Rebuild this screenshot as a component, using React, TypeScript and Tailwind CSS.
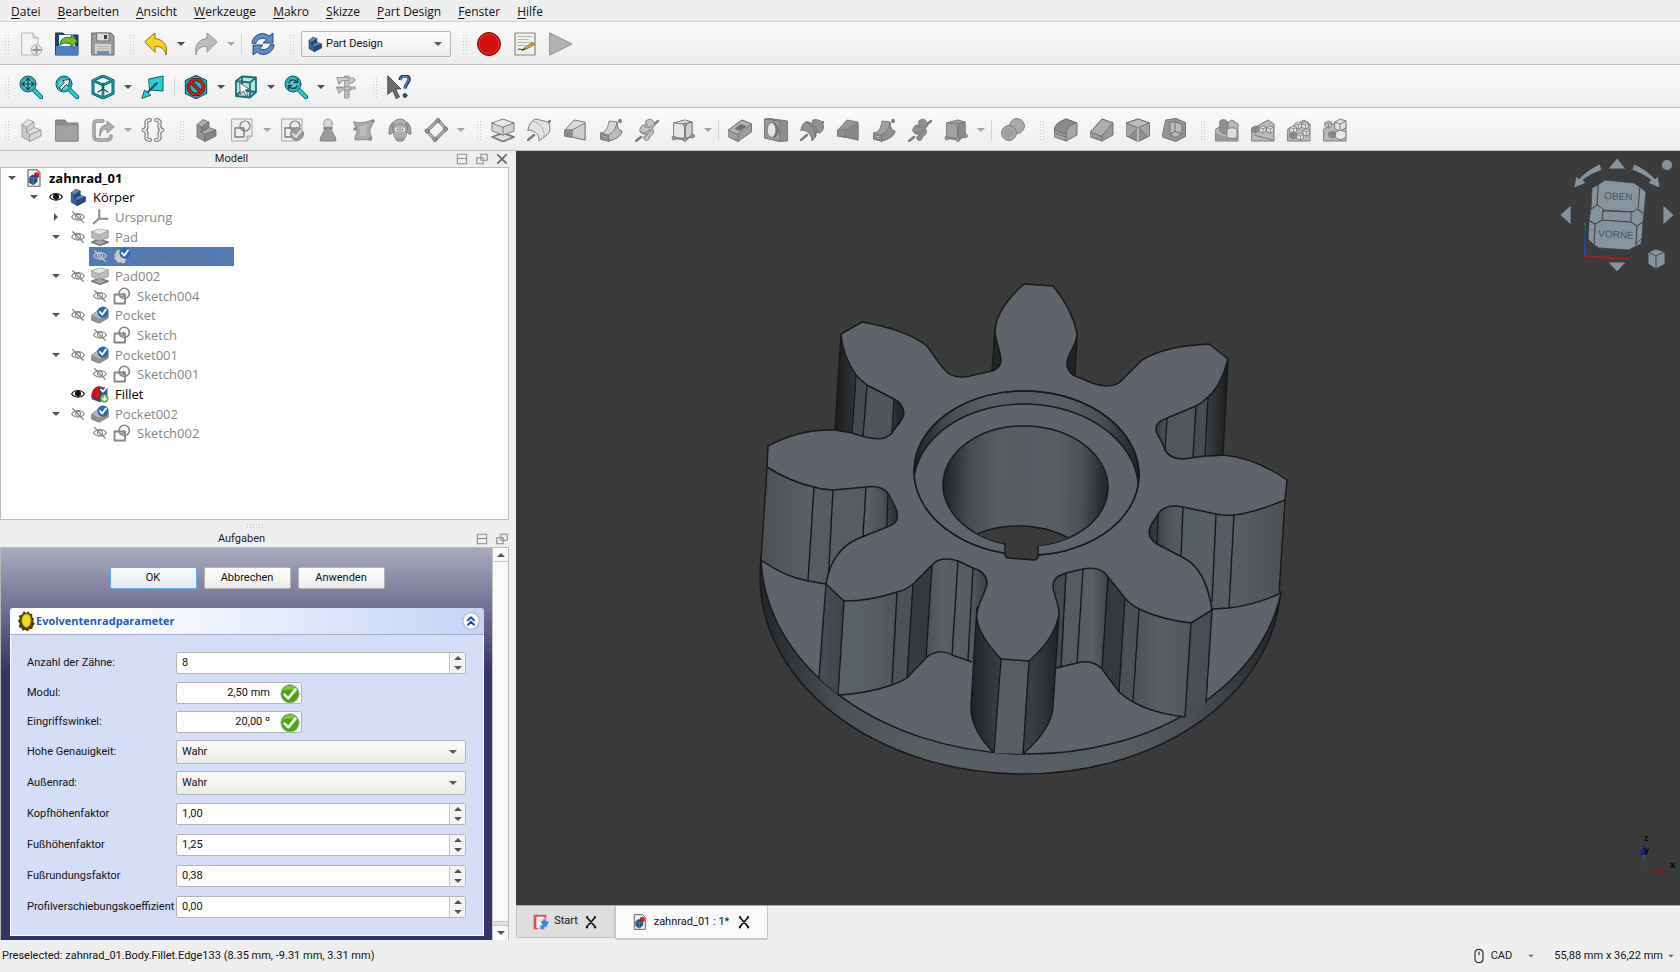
import type { ReactNode } from "react"

const D = "#7c7c7c" // outline of disabled icons
const M = "#9d9d9d"
const L = "#b9b9b9"
const W = "#e2e2e2"
const T = "#0c5a60"
const C = "#22d3dc"

function Icon({ children, className = "size-6" }: { children: ReactNode; className?: string }) {
  return (
    <svg viewBox="0 0 24 24" className={`${className} shrink-0`} fill="none" strokeLinejoin="round" strokeLinecap="round" aria-hidden="true">
      {children}
    </svg>
  )
}

function Arrow({ className = "text-[#555]", up = false }: { className?: string; up?: boolean }) {
  return (
    <svg viewBox="0 0 8 4" className={`w-2 h-1 shrink-0 ${className}`} aria-hidden="true">
      <path d={up ? "M0 4h8L4 0z" : "M0 0h8L4 4z"} fill="currentColor" />
    </svg>
  )
}

const stairs = (l: string, m: string, d: string, s: string) => (
  <g stroke={s} strokeWidth="0.8">
    <path d="M3 7v12l8 4.500V16l-3-2V9z" fill={m} />
    <path d="M3 6.500 9 1.500l6 2.500-7 5z" fill={l} />
    <path d="M8 9l7-5v5.500l-7 4.500z" fill={d} />
    <path d="M8 14l7-4.500 7 2.500-11 4.500z" fill={l} />
    <path d="M11 16.500 22 12v6l-11 5.500z" fill={d} />
  </g>
)

const magnifier = (
  <>
    <path d="M14 14l8 8" stroke={T} strokeWidth="4.500" />
    <path d="M14 14l8 8" stroke={C} strokeWidth="2.600" />
    <circle cx="9" cy="9" r="8" fill="#5ecdd4" stroke={T} strokeWidth="1" />
    <circle cx="9" cy="9" r="6.500" stroke="#18a9b4" strokeWidth="1.600" />
  </>
)

const sketchGrey = (
  <>
    <path d="M2 1h20v17l-5 5H2z" fill="#efefef" stroke="#a5a5a5" />
    <path d="M17 23v-5h5" fill="#ddd" stroke="#a5a5a5" />
    <path d="M5 10h9v9H5z" stroke={D} strokeWidth="1.400" />
    <circle cx="15" cy="8" r="5" stroke={D} strokeWidth="1.200" />
  </>
)

const loft = (f: string, g: string) => (
  <g stroke={D} strokeWidth="1">
    <path d="M2 12 11 2l11 2v18L9 19l-7-1z" fill={f} />
    <path d="M9 12 22 5v17L9 19z" fill={g} />
    <path d="M2 12h7v7l-7-1z" fill={M} strokeWidth="1.300" />
    <path d="M4.500 14.500h2.500v2.500H4.500z" />
  </g>
)
const pipe = (f: string, g: string) => (
  <g stroke={D} strokeWidth="1">
    <path d="M2 15c5-1 7-5 8-12l8 1c0 5 1 8 5 9-1 6-7 8-13 10l-8-2z" fill={f} />
    <path d="M9 17c5-2 8-6 9-13 0 5 1 8 5 9-1 6-7 8-13 10z" fill={g} />
    <path d="M2 15l7 2 1 6-8-2z" fill={M} strokeWidth="1.300" />
    <path d="M4.500 17.500h2.500v2H4.500z" fill={W} />
    <path d="M21 2.500v1" strokeWidth="3.500" />
  </g>
)
const helix = (f: string) => (
  <g stroke={D}>
    <path d="M1 23l5-4M18 7l5-4" strokeWidth="2.500" />
    <path d="M11 3c3-3 7-2 7 1 3 2 2 5-1 6 3 4 1 7-3 9 1 3-3 5-5 2-1-3 2-4 4-5-5 1-9-1-8-5 1-4 5-5 8-4-2-1-3-2-2-4z" fill={f} />
    <path d="M5 13c2 3 8 2 10-2M9 8c3 2 7 2 9-1M9 20c1-3 5-3 7-8" />
  </g>
)
const cubeNodes = (f: string, g: string) => (
  <g stroke={D}>
    <path d="M3 5l12-2 6 1v14l-7 4-11-2z" fill={f} />
    <path d="M3 5l11 1 7-2-7-2z" fill={f} />
    <path d="M14 6l7-2v14l-7 4z" fill={g} />
    <path d="M14 6v15L3 20M14 21l8-3" strokeWidth="1.800" />
    <circle cx="14" cy="6.500" r="1.700" fill={M} />
    <circle cx="3" cy="20" r="1.900" fill={M} />
    <circle cx="14" cy="21.500" r="1.900" fill={M} />
    <circle cx="21.500" cy="18" r="1.900" fill={M} />
  </g>
)
const isoBox = (x: number, y: number, f: string) => (
  <g transform={`translate(${x} ${y})`} stroke={D} strokeWidth="0.800">
    <path d="M0 1.700 3 0l3.500 1.200v4L3.500 7 0 5.500z" fill={f} />
    <path d="M0 1.700l3.500 1.300 3-1.800M3.500 3v4" />
  </g>
)
const ground = <path d="M1 11 17 2l6 4v17H1z" fill={L} stroke={D} />

const icons: Record<string, ReactNode> = {
  neu: (
    <>
      <path d="M3 1h11l5 5v17H3z" fill="#f4f4f4" stroke="#b5b5b5" />
      <path d="M14 1v5h5" fill="#ddd" stroke="#b5b5b5" />
      <circle cx="17.500" cy="18" r="5.300" fill="#eee" stroke="#a9a9a9" />
      <path d="M17.500 14.500v7M14 18h7" stroke="#999" strokeWidth="2" />
    </>
  ),
  oeffnen: (
    <>
      <path d="M1 1h7l2 2h13v20H1z" fill="#1f477d" stroke="#14305a" />
      <path d="M4 3h13l3 3v10H4z" fill="#fafafa" />
      <path d="M1 14h22v9H1z" fill="#4b7fc0" />
      <path d="M5 13c0-6 5-9 11-7V3.500l6.500 5.500-6.500 6v-3c-5-2-8-1-11 1z" fill="#6cc025" stroke="#2f6d0c" />
    </>
  ),
  speichern: (
    <>
      <path d="M1 1h19l3 3v19H1z" fill="#9c9c9a" stroke="#6e6e6c" />
      <path d="M6 1h12v8H6z" fill="#dedede" stroke="#777" />
      <path d="M13 3h3v4h-3z" fill="#3c3c3c" />
      <path d="M4 12h16v10H4z" fill="#d2d2d0" />
      <path d="M6 19h12v3H6z" fill="#5e8fd0" />
      <path d="M6 14.500h12M6 16.800h12" stroke="#aaa" strokeWidth="0.700" />
    </>
  ),
  undo: <path d="M1 9.500 11 1v5.500c8 1 13 6 11 16.500-1-6-5-9-11-8.500V20z" fill="#f3d328" stroke="#8a7407" />,
  redo: <path d="M23 9.500 13 1v5.500C5 7.500 0 12.500 2 23c1-6 5-9 11-8.500V20z" fill="#bdbdbd" stroke="#959595" />,
  aktualisieren: (
    <g fill="#5c8cca" stroke="#20426e" strokeWidth="0.900">
      <path d="M1 11C1 4 11-2 18 4l4-3v10H12l3.500-3.500C11 5 6 7 5 11z" />
      <path d="M23 13c0 7-10 13-17 7l-4 3V13h10l-3.500 3.500c4.500 2.500 9.500.5 10.500-3.500z" />
    </g>
  ),
  aufnahme: (
    <>
      <circle cx="12" cy="12" r="11.500" fill="#d00f10" stroke="#7e0808" />
      <circle cx="12" cy="12" r="10" stroke="#ee3737" strokeWidth="0.800" />
    </>
  ),
  makro: (
    <>
      <path d="M2 1h20v22H2z" fill="#f1f1ef" stroke="#85857f" strokeWidth="1.200" />
      <path d="M5 4.500h14M5 7.500h10M5 10.500h14M5 13.500h8" stroke="#aaa" strokeWidth="0.900" />
      <path d="M9 18l4-3.500 7-4 1.500 2-7 4z" fill="#dfae2b" stroke="#6a4a0a" strokeWidth="0.700" />
      <path d="M5 17.500c3-2 3 2 7-.5" stroke="#222" />
    </>
  ),
  play: <path d="M1 1l22 11L1 23z" fill="#b3b3b3" stroke="#8d8d8d" />,
  allesZeigen: (
    <>
      {magnifier}
      <path d="M9 3.500v11M3.500 9h11M7 5.500l2-2.300 2 2.300M7 12.500l2 2.300 2-2.300M5.500 7 3.200 9l2.300 2M12.500 7l2.300 2-2.300 2" stroke="#123d42" strokeWidth="1.200" />
    </>
  ),
  auswahlZeigen: (
    <>
      {magnifier}
      <path d="M4.500 12.500l5-5-2-2 7-1-1 7-2-2-5 5z" fill="#fff" stroke="#14363a" strokeWidth="0.900" />
    </>
  ),
  iso: (
    <>
      <path d="M12 1l10 4.500v13L12 23 2 18.500v-13z" fill="#eafcfd" stroke={T} strokeWidth="3" />
      <path d="M2 5.500 12 10l10-4.500M12 10v13" stroke={T} strokeWidth="2.600" />
      <path d="M12 1l10 4.500v13L12 23 2 18.500v-13zM2 5.500 12 10l10-4.500M12 10v13" stroke="#1fb4bd" strokeWidth="1" />
      <path d="M7 17l5-3 5 3M12 14V8" stroke="#2a3c3e" strokeWidth="1.200" />
    </>
  ),
  ansicht: (
    <>
      <path d="M8 4l14-3v15L9 15z" fill={C} stroke={T} />
      <path d="M16 8 6 18" stroke={T} strokeWidth="2" />
      <path d="M1 23l2.500-8 6 5z" fill={C} stroke={T} />
      <circle cx="14" cy="9.500" r="1.500" fill={T} />
    </>
  ),
  stil: (
    <>
      <path d="M12 .5l10.500 5v13L12 23.500 1.500 18.500v-13z" fill="#1cb9c4" stroke={T} strokeWidth="1.300" />
      <circle cx="12" cy="12" r="7.500" stroke="#5d0808" strokeWidth="3.600" />
      <path d="M7 7l10 10" stroke="#5d0808" strokeWidth="3.600" />
      <circle cx="12" cy="12" r="7.500" stroke="#d51f1f" strokeWidth="2.200" />
      <path d="M7 7l10 10" stroke="#d51f1f" strokeWidth="2.200" />
    </>
  ),
  auswahl: (
    <>
      <path d="M2 6 8 1.500l14 1V17l-6 5.500L2 21z" fill="#b5e4e6" />
      <path d="M2 6l14 1.500v15L2 21zM2 6l6-4.500 14 1L16 7.500M22 2.500V17l-6 5.500M8 2v13l14 2M8 15l-6 6" stroke="#1b6e74" strokeWidth="1.800" />
      <path d="M6 8l9 6-3.500 1 2.500 5-2 1-2.500-5L6.500 19z" fill="#fff" stroke="#444" strokeWidth="0.800" />
    </>
  ),
  sync: (
    <>
      {magnifier}
      <path d="M5 8c1-4 6-4 8-1M13.500 4v3.500H10M13 10.500c-1 4-6 3.500-8 1M4.500 14v-3.500H8" stroke="#123d42" strokeWidth="1.300" />
    </>
  ),
  messen: (
    <>
      <path d="M11 1h4v22h-4z" fill="#c7c7c7" stroke="#999" />
      <path d="M3 2.500h12v3H8L5 9zM2 13h9M15 3h4l2 2-3 3h-3M3 12h14v3H8l-3 3zM15 12h6v2h-6" fill="#cfcfcf" stroke="#999" strokeWidth="1.200" />
      <path d="M13 17h2M13 19.500h2" stroke="#888" strokeWidth="0.800" />
    </>
  ),
  hilfe: (
    <>
      <path d="M1 1l13 13H8.500l4 8-3.500 1.500-3-8L1 19z" fill="#6c6e6b" stroke="#333" strokeWidth="0.800" />
      <path d="M13 5c1-6 10-5 9 0-.5 3.500-4 3.500-4 8.500" stroke="#1d3454" strokeWidth="3.400" strokeLinecap="butt" />
      <path d="M13.500 5c1-5 8.500-4.500 8 0-.5 3.500-3.700 3.500-3.700 8" stroke="#5a83bd" strokeWidth="1.600" strokeLinecap="butt" />
      <circle cx="18" cy="20.500" r="1.900" fill="#3c5f92" stroke="#1d3454" />
    </>
  ),
  teil: stairs(W, "#c9c9c9", "#d5d5d5", "#949494"),
  gruppe: (
    <>
      <path d="M1 2h9l2 3h11v18H1z" fill="#8c8c8c" stroke="#7f7f7f" />
      <path d="M1 7h22v16H1z" fill="#a2a2a2" stroke="#8a8a8a" />
    </>
  ),
  link: (
    <>
      <path d="M12 3H6Q3 3 3 6v12q0 4 4 4h9q4 0 4-4" stroke="#888" strokeWidth="3.400" />
      <path d="M12 3H6Q3 3 3 6v12q0 4 4 4h9q4 0 4-4" stroke="#b0b0b0" strokeWidth="1.800" />
      <path d="M9 18c-1-6 1-11 7-11V3l7 6-7 6v-4c-4 0-6 2-7 7z" fill="#b0b0b0" stroke="#888" />
    </>
  ),
  varset: (
    <>
      <path d="M9 2C5 2 5 4 5.500 7S5 11.500 2.500 12c2.500.5 3.500 2 3 5s-.5 5 3.500 5M15 2c4 0 4 2 3.500 5s.5 4.500 3 5c-2.500.5-3.500 2-3 5s.5 5-3.500 5" stroke="#7e7e7e" strokeWidth="4" />
      <path d="M9 2C5 2 5 4 5.500 7S5 11.500 2.500 12c2.500.5 3.500 2 3 5s-.5 5 3.500 5M15 2c4 0 4 2 3.500 5s.5 4.500 3 5c-2.500.5-3.500 2-3 5s.5 5-3.500 5" stroke="#e8e8e8" strokeWidth="1.800" />
    </>
  ),
  koerper: stairs("#aaa", "#929292", "#848484", "#6c6c6c"),
  skizze: sketchGrey,
  skizzePruefen: (
    <>
      {sketchGrey}
      <circle cx="17" cy="16" r="6.500" fill="#9a9a9a" stroke="#8a8a8a" />
      <path d="M13 16l3 3 5-6.500" stroke="#e5e5e5" strokeWidth="2" />
    </>
  ),
  pruefen: (
    <>
      <path d="M9 9C9 15 4 17 4 23h16c0-6-5-8-5-14z" fill="#9b9b9b" stroke="#858585" />
      <circle cx="12" cy="5.500" r="4.500" fill="#d5d5d5" stroke="#999" />
      <path d="M8 10h8" stroke="#858585" strokeWidth="2" />
    </>
  ),
  shapebinder: (
    <>
      <path d="M2 4c6 2 12 0 19-2 1 4-3 7-3 11s3 6 1 9c-6-1-10 0-16 0-1-4 3-6 2-10-1-3-3-5-3-8z" fill="#aaa" stroke="#8b8b8b" />
      <path d="M7 8c4 0 7-1 9-2-2 4-2 8-1 12-3-1-5 0-8 0 2-3 1-7 0-10z" fill="#bebebe" />
      <circle cx="21" cy="3" r="1.800" fill="#888" />
      <circle cx="3" cy="11" r="1.800" fill="#888" />
      <circle cx="18" cy="21" r="1.800" fill="#888" />
    </>
  ),
  klon: (
    <g stroke="#7f7f7f">
      <path d="M6 4C2 5 1 10 1 16c3 1 5-2 5-7zM18 4c4 1 5 6 5 12-3 1-5-2-5-7z" fill="#a0a0a0" />
      <path d="M6 4c3-4 9-4 12 0l1 5c0 6-1 10-4 14H9C6 19 5 15 5 9z" fill="#b0b0b0" />
      <path d="M6 8c3-3 9-3 12 0M9.500 20l2.500 1.500 2.500-1.500" />
      <circle cx="9" cy="11.500" r="2" fill="#eee" stroke="none" />
      <circle cx="15" cy="11.500" r="2" fill="#eee" stroke="none" />
      <path d="M9.500 11.500h.1M14.500 11.500h.1" stroke="#444" strokeWidth="1.500" />
    </g>
  ),
  bezug: (
    <>
      <path d="M3 13 14 2l8 9-11 11z" stroke="#868686" strokeWidth="3.200" />
      <path d="M3 13 14 2l8 9-11 11z" stroke="#b5b5b5" strokeWidth="1.200" />
      {[[3, 13], [14, 2.500], [21.500, 11], [11, 21.500]].map(([x, y]) => (
        <circle key={x} cx={x} cy={y} r="2" fill="#9a9a9a" stroke="#777" />
      ))}
    </>
  ),
  pad: (
    <>
      <path d="M1 19l11-4 11 4-11 4.500z" fill="#ddd" stroke="#777" strokeWidth="1.800" />
      <g stroke={D}>
        <path d="M1 5v8l11 4 11-4V5z" fill="#d4d4d4" />
        <path d="M1 5 12 1l11 4-11 4z" fill="#e9e9e9" />
        <path d="M12 9v8" />
      </g>
    </>
  ),
  drehung: (
    <>
      <path d="M1 22l6-5M19 7l4-4" stroke={D} strokeWidth="2.500" />
      <path d="M1 12C2 6 5 2 9 1l12 3c3 4 2 9 0 12l-9 7c1-6-4-11-11-11z" fill={W} stroke={D} />
      <path d="M6 3c7 2 12 8 11 16" stroke="#aaa" />
    </>
  ),
  loft: loft("#dcdcdc", "#cecece"),
  pipe: pipe("#d5d5d5", "#bdbdbd"),
  helix: helix("#c4c4c4"),
  primitiv: cubeNodes("#e6e6e6", "#d0d0d0"),
  pocket: (
    <g stroke="#6f6f6f" strokeWidth="0.900">
      <path d="M0.500 12 14 2l9.500 4v8L10 23.500.5 19z" fill={M} />
      <path d="M.5 12 14 2l9.500 4L10 16z" fill="#b4b4b4" />
      <path d="M10 16v7.500" />
      <path d="M7.500 10.500 13 6.500l5 2-6 4z" fill="#707070" />
    </g>
  ),
  bohrung: (
    <g stroke="#6f6f6f" strokeWidth="0.900">
      <path d="M1 1l5-.5L23.500 3v20l-7 .5L1 20z" fill="#8e8e8e" />
      <path d="M1 1l15 2.500v20L1 20z" fill={M} />
      <ellipse cx="8.500" cy="12" rx="5.500" ry="7.500" fill="#e5e5e5" />
      <path d="M9 5c4 3 4 11 0 14 7 1 7-14 0-14z" fill="#777" />
    </g>
  ),
  nut: (
    <>
      <path d="M1 22l6-5M19 7l4-3" stroke={D} strokeWidth="2.500" />
      <path d="M1 12C2 6 5 3 9 4l3 2 1-4c4-1 8 0 10 4 1 4 0 7-3 9l-4-1v4l-4 5c0-6-4-11-11-11z" fill="#929292" stroke="#6f6f6f" />
      <path d="M6 4c7 3 10 9 9 15M13 7c3 2 4 4 4 7" stroke="#6f6f6f" />
    </>
  ),
  loftSub: loft("#979797", "#888"),
  pipeSub: pipe("#a0a0a0", "#8e8e8e"),
  helixSub: helix("#8f8f8f"),
  primitivSub: cubeNodes("#a2a2a2", "#8c8c8c"),
  boolesch: (
    <g stroke="#858585">
      <circle cx="16" cy="8" r="7.500" fill="#a9a9a9" />
      <circle cx="8" cy="15" r="7.500" fill="#9c9c9c" />
      <circle cx="8" cy="15" r="5.500" stroke="#b5b5b5" />
    </g>
  ),
  fillet: (
    <g stroke="#707070">
      <path d="M0.500 12C1 6 5 4 12 1l11 4v12l-11 6-11.500-4z" fill="#a4a4a4" />
      <path d="M.5 12C1 6 5 4 12 1l11 4c-7 1-11 5-11 11z" fill="#8b8b8b" />
      <path d="M12 16v7M.5 15l11.500 4" />
    </g>
  ),
  fase: (
    <g stroke="#707070">
      <path d="M0.500 14 12 1l11 4v12l-11 6-11.500-4z" fill="#9a9a9a" />
      <path d="M.5 14 12 1l11 4-11 13z" fill="#adadad" />
      <path d="M12 18v5" />
    </g>
  ),
  formschraege: (
    <g stroke="#707070">
      <path d="M0.500 5 12 1l11.500 4v13L12 23.500.5 18z" fill="#a4a4a4" />
      <path d="M.5 5 12 1l11.500 4L12 9.500z" fill="#bcbcbc" />
      <path d="M12 9.500 3 19l9 4.500 9-4.500z" fill="#8f8f8f" />
      <path d="M12 9.500v14" stroke="#e0e0e0" />
    </g>
  ),
  dicke: (
    <g stroke="#707070">
      <path d="M4 2l10-1.500 9.500 4v14l-10 5L.5 19z" fill="#949494" />
      <path d="M8 4.500v12l6 3 6-4V6l-6-2z" fill="#b9b9b9" />
      <path d="M8 16.500l5-3 7 2M13 13.500V4.500" />
    </g>
  ),
  spiegeln: (
    <>
      {ground}
      <path d="M1 15c7 4 12 4 22 3v5H1z" fill="#9a9a9a" />
      <path d="M5 3c3-3 7-1 8 2v9c-2 3-6 2-8-1z" fill="#909090" stroke={D} />
      <path d="M12 12c0-3 10-3 10 0v7c-2 2-8 2-10 0z" fill="#dedede" stroke={D} />
    </>
  ),
  linear: (
    <>
      {ground}
      <path d="M3 17l19 5" stroke={D} />
      {isoBox(1, 8, "#8c8c8c")}
      {isoBox(8.500, 8, W)}
      {isoBox(16, 8, W)}
    </>
  ),
  polar: (
    <>
      {ground}
      {isoBox(8, 4, W)}
      {isoBox(15, 4, W)}
      {isoBox(3, 8, W)}
      {isoBox(16, 11, W)}
      {isoBox(3, 14, "#8c8c8c")}
      {isoBox(10, 15, W)}
    </>
  ),
  multi: (
    <>
      {ground}
      <path d="M12 4l5-3 6 2v7l-6 3-5-2z" fill="#e0e0e0" stroke={D} />
      <path d="M12 4l5 2 6-3M17 6v7" stroke={D} />
      {isoBox(2, 3, "#c2c2c2")}
      {isoBox(6, 13, "#8c8c8c")}
      <path d="M13 14l4-2 6 2v5l-5 3-5-2z" fill="#e8e8e8" stroke={D} />
    </>
  ),
}

type Tool = string | [string, string]

// "|" separator, ":" grip, "v" / "vd" drop-down arrow (vd = greyed out)
const bar1a: Tool[] = [":", ["neu", "Neu"], ["oeffnen", "Öffnen"], ["speichern", "Speichern"], ":", ["undo", "Rückgängig"], "v", ["redo", "Wiederherstellen"], "vd", "|", ["aktualisieren", "Aktualisieren"], ":"]
const bar1b: Tool[] = [":", ["aufnahme", "Makro aufzeichnen"], ["makro", "Makros"], ["play", "Makro ausführen"]]
const bar2: Tool[] = [":", ["allesZeigen", "Alles anzeigen"], ["auswahlZeigen", "Auswahl anzeigen"], ["iso", "Isometrisch"], "v", ["ansicht", "Ansicht ausrichten"], "|", ["stil", "Darstellungsart"], "v", ["auswahl", "Auswahlfilter"], "v", ["sync", "Ansicht synchronisieren"], "v", ["messen", "Messen"], ":", ["hilfe", "Direkthilfe"]]
const bar3: Tool[] = [
  ":", ["teil", "Teil"], ["gruppe", "Gruppe"], ["link", "Link"], "vd", ["varset", "Variablensatz"],
  ":", ["koerper", "Körper"], ["skizze", "Skizze"], "vd", ["skizzePruefen", "Skizze überprüfen"], ["pruefen", "Geometrie prüfen"], ["shapebinder", "Formbinder"], ["klon", "Klon"], ["bezug", "Bezug"], "vd",
  ":", ["pad", "Aufpolsterung"], ["drehung", "Drehteil"], ["loft", "Ausformung"], ["pipe", "Rohr"], ["helix", "Wendel"], ["primitiv", "Grundkörper"], "vd",
  "|", ["pocket", "Tasche"], ["bohrung", "Bohrung"], ["nut", "Nut"], ["loftSub", "Abzuziehende Ausformung"], ["pipeSub", "Abzuziehendes Rohr"], ["helixSub", "Abzuziehende Wendel"], ["primitivSub", "Abzuziehender Grundkörper"], "vd",
  "|", ["boolesch", "Boolesche Verknüpfung"],
  ":", ["fillet", "Verrundung"], ["fase", "Fase"], ["formschraege", "Formschräge"], ["dicke", "Dicke"],
  ":", ["spiegeln", "Spiegeln"], ["linear", "Lineares Muster"], ["polar", "Polares Muster"], ["multi", "Mehrfachtransformation"],
]

function Grip({ first }: { first: boolean }) {
  return (
    <span className={`${first ? "w-[13px]" : "w-[17px]"} shrink-0 flex justify-end pr-[3px]`}>
      <span className="w-[6px] h-[21px] bg-[radial-gradient(circle,#c6c6c6_1px,transparent_1px)] bg-size-[3px_3px]" />
    </span>
  )
}

function Tools({ items, lead = true }: { items: Tool[]; lead?: boolean }) {
  return (
    <>
      {items.map((t, i) => {
        if (t === ":") return <Grip key={i} first={lead && i === 0} />
        if (t === "|") return <span key={i} className="w-[7px] shrink-0 flex justify-center"><span className="w-px h-5 bg-[#d2d2d2]" /></span>
        if (t === "v" || t === "vd")
          return (
            <button key={i} aria-label="Weitere Optionen" className="w-[14px] h-6 shrink-0 flex items-center justify-center">
              <Arrow className={t === "v" ? "text-[#4d4d4d]" : "text-[#a5a5a5]"} />
            </button>
          )
        return (
          <button key={i} aria-label={t[1]} className="w-9 h-8 shrink-0 flex items-center justify-center">
            <Icon>{icons[t[0]]}</Icon>
          </button>
        )
      })}
    </>
  )
}

function Toolbar({ children }: { children: ReactNode }) {
  return <div className="h-[43px] flex items-center pt-[2px] bg-linear-to-b from-[#fafafa] to-[#eeeeee] border-b border-[#bdbdbd] overflow-hidden">{children}</div>
}

const blueBody = stairs("#5b8ac2", "#3a679f", "#27497a", "#17305a")

const docIcon = (
  <>
    <path d="M4 1h12l4 4v18H4z" fill="#f2f2f2" stroke="#666" strokeWidth="1.500" />
    <path d="M12 6l3-2 4 1.500v5L15 13l-3-2z" fill="#cc1d22" />
    <path d="M6 11l4-3 6 3v6l-5 4-5-3z" fill="#2c5590" stroke="#17305a" />
    <path d="M6 11l5 2 5-2M11 13v8" stroke="#7aa3d8" strokeWidth="0.700" />
  </>
)

const check = (
  <>
    <circle cx="16" cy="8" r="7.500" fill="#2f67b0" />
    <path d="M12 8l3 3.500 5-7" stroke="#fff" strokeWidth="2.400" />
  </>
)

const treeIcons: Record<string, ReactNode> = {
  doc: docIcon,
  body: blueBody,
  origin: <path d="M11 2v12M11 14l12 .5M11 14l-8 7" stroke="#8b8b8b" strokeWidth="2.800" strokeLinecap="butt" />,
  pad: (
    <>
      <path d="M1 19l10-4 12 4-11 4z" fill="#aaa" stroke="#777" strokeWidth="2" />
      <path d="M1 5v8l10 4 12-4V4z" fill="#bdbdbd" stroke="#8d8d8d" />
      <path d="M1 5 12 1l11 3-12 5z" fill="#e8e8e8" stroke="#999" />
      <path d="M11 9v8" stroke="#999" />
    </>
  ),
  gear: (
    <>
      <path d="M9 2 6 4 4 4 3 8 1 10l1 3-1 3 3 2 2 4 4-1 4 2 3-3 1-5-6-3-3-9z" fill="#c9c9c9" stroke="#666" />
      {check}
    </>
  ),
  sketch: (
    <>
      <path d="M2 10h14v12H2z" stroke="#858585" strokeWidth="2.400" />
      <circle cx="15" cy="8.500" r="6.800" stroke="#858585" strokeWidth="2.200" />
      <path d="M9 13h5V8" stroke="#858585" strokeWidth="1.500" />
    </>
  ),
  pocket: (
    <>
      <path d="M1 12 12 4l11 6v6L11 23 1 19z" fill="#8f8f8f" stroke="#777" />
      <path d="M1 12l11-8 11 6-12 7z" fill="#b5b5b5" />
      {check}
    </>
  ),
  fillet: (
    <>
      <path d="M1 14C2 6 6 3 12 2l10 2v14l-10 5L1 19z" fill="#2d5a9c" />
      <path d="M1 16C1 7 5 2 12 2v10l-2 7z" fill="#d0181c" stroke="#6d0c0e" strokeWidth="0.800" />
      <path d="M13 6l3 3 5-6" stroke="#fff" strokeWidth="2.200" />
      <circle cx="18" cy="18" r="5.500" fill="#6abf20" />
      <path d="M18 14.500v6M15.500 18l2.500 2.800 2.500-2.800" stroke="#fff" strokeWidth="1.700" />
    </>
  ),
}

function Eye({ on, light }: { on: boolean; light?: boolean }) {
  const c = on ? "#111" : light ? "#c9c9c9" : "#858585"
  return (
    <Icon className="size-[14px]">
      <path d="M1 12C6 4 18 4 23 12 18 19 6 19 1 12z" fill={on ? "#fff" : "none"} stroke={c} strokeWidth="2" />
      <circle cx="12" cy="11.500" r="4.300" fill={on ? c : "none"} stroke={c} strokeWidth="1.800" />
      {!on && <path d="M3 3l18 18" stroke={c} strokeWidth="2.200" />}
    </Icon>
  )
}

type Row = { name: string; icon: string; depth: number; open?: "down" | "right"; eye?: boolean; on?: boolean; selected?: boolean }

const rows: Row[] = [
  { name: "zahnrad_01", icon: "doc", depth: 0, open: "down", on: true },
  { name: "Körper", icon: "body", depth: 1, open: "down", eye: true, on: true },
  { name: "Ursprung", icon: "origin", depth: 2, open: "right", eye: true },
  { name: "Pad", icon: "pad", depth: 2, open: "down", eye: true },
  { name: "InvoluteGear", icon: "gear", depth: 3, eye: true, selected: true },
  { name: "Pad002", icon: "pad", depth: 2, open: "down", eye: true },
  { name: "Sketch004", icon: "sketch", depth: 3, eye: true },
  { name: "Pocket", icon: "pocket", depth: 2, open: "down", eye: true },
  { name: "Sketch", icon: "sketch", depth: 3, eye: true },
  { name: "Pocket001", icon: "pocket", depth: 2, open: "down", eye: true },
  { name: "Sketch001", icon: "sketch", depth: 3, eye: true },
  { name: "Fillet", icon: "fillet", depth: 2, eye: true, on: true },
  { name: "Pocket002", icon: "pocket", depth: 2, open: "down", eye: true },
  { name: "Sketch002", icon: "sketch", depth: 3, eye: true },
]

const indent = ["pl-0", "pl-[22px]", "pl-11", "pl-[66px]"]

function Tree() {
  return (
    <ul className="h-[275px] grid auto-rows-fr text-[13px] leading-5 font-['Open_Sans','Noto_Sans',sans-serif]">
      {rows.map((r) => (
        <li key={r.name} className={`flex items-center ${indent[r.depth]}`}>
          <span className="w-[22px] shrink-0 flex justify-center">
            {r.open && (
              <button aria-label={`${r.name} auf- oder zuklappen`}>
                <Arrow className={`text-[#555] ${r.open === "right" ? "-rotate-90" : ""}`} />
              </button>
            )}
          </span>
          <span className={`flex items-center h-full ${r.selected ? "bg-[#527ab6] w-[145px]" : ""}`}>
            {r.eye && <span className="w-[22px] flex justify-center"><Eye on={!!r.on} light={r.selected} /></span>}
            <span className="w-[22px] flex justify-center"><Icon className="size-[18px]">{treeIcons[r.icon]}</Icon></span>
            <span className={`pl-1 ${r.depth === 0 ? "font-bold text-black" : r.selected ? "text-[#66738a]" : r.on ? "text-black" : "text-[#868686]"}`}>{r.name}</span>
          </span>
        </li>
      ))}
    </ul>
  )
}

function DockTitle({ title, close }: { title: string; close?: boolean }) {
  return (
    <div className="h-4 flex items-center text-[#1a1a1a]">
      <span className="flex-1 text-center pl-2">{title}</span>
      <div className="flex items-center gap-[6px] text-[#8a8a8a]">
        <button aria-label="Überlagern">
          <Icon className="size-[14px]"><path d="M4 4h16v16H4zM4 11h16" stroke="currentColor" strokeWidth="1.800" /></Icon>
        </button>
        <button aria-label="Abdocken">
          <Icon className="size-[14px]"><path d="M10 4h11v10H10zM3 10h11v10H3z" fill="#efefef" stroke="currentColor" strokeWidth="1.800" /></Icon>
        </button>
        {close && (
          <button aria-label="Schließen">
            <Icon className="size-[14px]"><path d="M4 4l16 16M20 4 4 20" stroke="#666" strokeWidth="3" strokeLinecap="butt" /></Icon>
          </button>
        )}
      </div>
    </div>
  )
}

const box = "border border-[#b4b4b4] rounded-[2px]"

function Spin({ id, label, value }: { id: string; label: string; value: string }) {
  return (
    <>
      <label htmlFor={id}>{label}</label>
      <div className="h-6 flex items-center">
        <div className={`${box} h-[22px] flex-1 flex bg-white overflow-hidden`}>
          <input id={id} defaultValue={value} className="flex-1 min-w-0 px-[5px] outline-none" />
          <div className="w-4 flex flex-col border-l border-[#c4c4c4] bg-[#f4f4f4]">
            <button aria-label={`${label} erhöhen`} className="flex-1 flex items-center justify-center"><Arrow up className="text-[#555]" /></button>
            <button aria-label={`${label} verringern`} className="flex-1 flex items-center justify-center"><Arrow /></button>
          </div>
        </div>
      </div>
    </>
  )
}

function Quantity({ id, label, value }: { id: string; label: string; value: string }) {
  return (
    <>
      <label htmlFor={id}>{label}</label>
      <div className={`${box} h-[22px] w-[126px] flex items-center bg-white pr-px`}>
        <input id={id} defaultValue={value} className="flex-1 min-w-0 pr-[10px] text-right outline-none" />
        <Icon className="size-5">
          <circle cx="12" cy="13" r="11" fill="#4aa50f" stroke="#a5a5a5" strokeWidth="1" />
          <path d="M3 9a10 10 0 0 1 18 0c-6-2-12-1-18 0z" fill="#7cc843" />
          <path d="M5.500 14l4.500 4.500L18.500 8" stroke="#fff" strokeWidth="3.200" />
        </Icon>
      </div>
    </>
  )
}

function Choice({ id, label }: { id: string; label: string }) {
  return (
    <>
      <label htmlFor={id}>{label}</label>
      <div className={`${box} h-6 flex items-center bg-linear-to-b from-[#fbfbfb] to-[#ebebeb] pr-2`}>
        <select id={id} defaultValue="Wahr" className="flex-1 min-w-0 h-full appearance-none px-[5px] outline-none">
          <option>Wahr</option>
          <option>Falsch</option>
        </select>
        <Arrow />
      </div>
    </>
  )
}

function TaskPanel() {
  const btn = "w-[87px] h-[22px] rounded-[2px] border bg-linear-to-b"
  return (
    <div className="flex border border-[#b8b8b8] border-b-0">
      <div className="flex-1 min-w-0 pt-[19px] pl-[9px] pr-2 pb-1 bg-[linear-gradient(#a9a9be,#343465_125px)]">
        <div className="flex justify-center gap-[7px]">
          <button className={`${btn} border-[#5cb0ee] from-[#fbfdff] to-[#e4eaee]`}>OK</button>
          <button className={`${btn} border-[#b4b4b4] from-[#fcfcfc] to-[#ececec]`}>Abbrechen</button>
          <button className={`${btn} border-[#b4b4b4] from-[#fcfcfc] to-[#ececec]`}>Anwenden</button>
        </div>
        <section className="mt-[19px]">
          <header className="h-[27px] flex items-center rounded-t-[3px] bg-linear-to-r from-white from-20% to-[#c6d3f7] pl-[6px] pr-1 border-b border-[#a3abc9]">
            <Icon className="size-5">
              <path d="M10 1l2 2 3-2 1 3h3v4l2 1-1 4 2 2-2 3-1 3-3 0-2 3-3-2-3 1-1-3-3-1 1-4-2-3 2-3-1-3 3-1z" fill="#4c4107" stroke="#3a3205" />
              <ellipse cx="12.500" cy="11.500" rx="5.500" ry="8" fill="#efdc23" stroke="#a3920d" />
            </Icon>
            <h2 className="flex-1 text-[11px] font-bold text-[#2158c8] font-['Open_Sans','Noto_Sans',sans-serif]">Evolventenradparameter</h2>
            <button aria-label="Einklappen">
              <Icon className="size-[18px]">
                <circle cx="12" cy="12" r="11" fill="#fff" stroke="#a9b0c8" strokeWidth="1.500" />
                <path d="M8 11l4-4 4 4M8 17l4-4 4 4" stroke="#2350b0" strokeWidth="2.600" />
              </Icon>
            </button>
          </header>
          <form className="grid grid-cols-[142px_1fr] gap-x-[7px] gap-y-[7px] items-center border border-t-0 border-white bg-[#d6def7] pt-[16px] pb-4 pl-[16px] pr-[17px]">
            <Spin id="zaehne" label="Anzahl der Zähne:" value="8" />
            <Quantity id="modul" label="Modul:" value="2,50 mm" />
            <Quantity id="winkel" label="Eingriffswinkel:" value="20,00 º" />
            <Choice id="genau" label="Hohe Genauigkeit:" />
            <Choice id="aussen" label="Außenrad:" />
            <Spin id="kopf" label="Kopfhöhenfaktor" value="1,00" />
            <Spin id="fuss" label="Fußhöhenfaktor" value="1,25" />
            <Spin id="rundung" label="Fußrundungsfaktor" value="0,38" />
            <Spin id="profil" label="Profilverschiebungskoeffizient" value="0,00" />
          </form>
        </section>
      </div>
      <div className="w-4 flex flex-col bg-[#fafafa] border-l border-[#c6c6c6]">
        <button aria-label="Nach oben" className="h-[14px] flex items-center justify-center border-b border-[#c6c6c6]"><Arrow up className="text-[#555]" /></button>
        <div className="flex-1" />
        <div className="h-[5px] border-y border-[#c6c6c6] bg-[#e2e2e2]" />
        <button aria-label="Nach unten" className="h-[14px] flex items-center justify-center"><Arrow /></button>
      </div>
    </div>
  )
}

const face = "#5f636b"
const gearTop =
  "M1024 284L1053 286C1064 299 1073 315 1077 333C1078 344 1067 354 1067 363C1067 369 1069 372 1073 375L1092 383C1103 387 1114 387 1120 382L1142 360C1160 349 1185 345 1209 344L1228 359C1223 379 1216 390 1208 397C1204 401 1200 404 1196 406L1167 418C1159 421 1156 424 1156 430C1156 434 1162 440 1165 450C1168 455 1174 459 1183 459L1205 456Q1214 456 1223 455C1246 457 1267 466 1287 480L1285 500C1268 507 1252 513 1234 515Q1225 516 1216 514L1183 507C1170 504 1162 508 1158 514C1154 521 1149 526 1149 533C1150 538 1152 541 1157 544L1182 557C1197 564 1208 582 1212 610L1191 623C1173 621 1156 617 1139 609Q1131 605 1125 598L1108 577C1103 569 1093 567 1083 569L1066 573C1056 576 1053 580 1053 587C1054 595 1059 604 1059 614C1056 632 1044 648 1029 661L1001 659C988 645 979 632 977 620C975 606 986 594 987 583C987 576 981 570 973 568L958 561C947 557 937 559 932 565L913 584C908 588 902 591 897 592C879 598 862 601 844 601L826 584C830 560 842 546 857 539L887 527C896 524 898 520 897 514C897 507 892 502 889 495C886 489 877 485 866 487L833 490Q823 490 814 487C796 483 781 476 767 467L768 446C790 434 812 429 835 430L852 433L865 437C877 440 887 439 892 433C895 427 904 420 904 413C903 405 898 401 894 399L867 385Q861 381 856 375C847 362 842 349 841 334L862 322C885 326 912 334 927 346C935 357 939 365 948 373C955 378 966 378 974 375L992 371C998 369 1001 365 1001 360C1000 350 996 342 995 332C995 314 1010 296 1024 284Z"

// side faces of the teeth: outline and gradient
const walls: [string, string][] = [
  ["M994 330L992 374L1006 368L1003 350Z", "#222426"],
  ["M1077 330L1064 360L1070 375L1075 376Z", "#222426"],
  ["M841 334L835 431L852 436L862 380Z", "url(#dl)"],
  ["M856 370L852 437L865 440L868 380Z", "#464b4f"],
  ["M867 380L863 442L893 440L896 395Z", "#505359"],
  ["M894 395L892 440L906 420L905 402Z", "url(#lr)"],
  ["M1228 359L1223 456L1203 459L1207 392Z", "url(#dr)"],
  ["M1208 392L1205 459L1191 460L1196 402Z", "#464b50"],
  ["M1196 402L1193 462L1163 455L1167 412Z", "#50565a"],
  ["M1167 412L1165 455L1150 435L1153 420Z", "url(#rl)"],
  ["M767 467L761 560Q785 574 808 581L815 482Z", "url(#ll)"],
  ["M814 482L808 581Q818 584 828 585L833 485Z", "#555b5f"],
  ["M833 485L826 585L863 540L867 482Z", "#575d60"],
  ["M866 482L863 540L902 520L897 485Z", "url(#lr)"],
  ["M1285 498L1279 594Q1255 605 1229 608L1234 510Z", "url(#rr)"],
  ["M1234 510L1229 608L1211 609L1216 510Z", "#565c61"],
  ["M1216 510L1212 609L1180 560L1183 500Z", "#585f61"],
  ["M1183 500L1181 560L1145 545L1145 510L1160 500Z", "url(#rl)"],
  ["M826 584L819 678L838 695L844 600Z", "url(#e1)"],
  ["M844 600L838 695Q865 694 892 685L898 588Z", "url(#e2)"],
  ["M897 588L892 685Q901 682 907 678L913 580Z", "#4c5155"],
  ["M913 580L907 678L926 658L932 560Z", "#363a3d"],
  ["M932 560L926 658C933 651 944 650 952 655L958 556Z", "url(#e3)"],
  ["M958 556L952 655L968 660L974 563Z", "#565c5f"],
  ["M973 562L968 660L975 663L992 580Z", "url(#e4)"],
  ["M1054 575L1056 668L1061 667L1066 568Z", "#44494c"],
  ["M1066 568L1061 667L1077 663L1083 564Z", "#555b5e"],
  ["M1083 564L1077 663C1088 660 1096 663 1102 669L1108 572Z", "url(#g1)"],
  ["M1108 572L1102 669L1119 692L1125 594Z", "#363a3d"],
  ["M1125 594L1119 692Q1126 698 1133 701L1139 604Z", "#4b5054"],
  ["M1139 604L1133 701C1149 710 1167 715 1185 717L1191 619Z", "url(#g2)"],
  ["M1191 619L1185 717L1206 703L1212 606Z", "#4a4e54"],
  ["M977 607L971 705C970 724 981 740 994 753L1001 655Z", "url(#f1)"],
  ["M1001 655L994 753L1023 754L1029 657Z", "#575d61"],
  ["M1029 657L1023 754C1040 739 1053 722 1053 705L1059 610Z", "url(#f2)"],
]

const wallEdges =
  "M995 332L992 371M1077 333L1075 375M841 334L835 430M856 375L852 433M867 385L863 436M894 399L892 433M1228 359L1223 455M1208 397L1205 456M1196 406L1193 457M1167 418L1165 450M767 467L761 560M814 487L808 581M833 490L828 584M866 487L863 536M888 493L887 526M1285 500L1279 594M1234 515L1229 608M1216 514L1212 602M1183 507L1181 557M1158 514L1157 544M826 584L819 678M844 601L838 695M897 592L892 685M913 584L907 678M932 565L926 658M958 561L952 655M973 568L968 660M977 607L971 705M1001 659L994 753M1029 661L1023 754M1059 614L1053 707M1066 573L1061 667M1083 569L1077 663M1108 577L1102 669M1125 598L1119 692M1139 609L1133 701M1191 623L1185 717M1212 610L1206 703M761 560Q785 577 808 581L826 584M838 695Q865 694 892 685Q901 682 907 678L926 658C933 651 944 650 952 655L972 662M1056 668L1077 663C1088 660 1096 663 1102 669L1119 692C1137 708 1160 714 1185 717M1212 609L1229 608Q1255 605 1279 594M971 705C970 724 981 740 994 753M1023 754C1040 739 1053 722 1053 705"

const gradients: [string, number, number, string[]][] = [
  ["dl", 836, 856, ["#1c1d1f", "#33363a"]],
  ["dr", 1204, 1227, ["#404549", "#1c1d1f"]],
  ["lr", 866, 899, ["#5a6063", "#4c5053", "#25282a"]],
  ["rl", 1148, 1184, ["#2a2d2f", "#4c5156", "#5a6063"]],
  ["ll", 764, 814, ["#4d5156", "#5a6063"]],
  ["rr", 1230, 1284, ["#585f61", "#4c5055"]],
  ["e1", 820, 843, ["#494d54", "#404449"]],
  ["e2", 840, 897, ["#5a6063", "#596062", "#4f5458"]],
  ["e3", 928, 956, ["#4c5155", "#5a6165", "#565c60"]],
  ["e4", 970, 988, ["#555b5e", "#383c3e"]],
  ["g1", 1078, 1106, ["#545a5f", "#596063", "#44484c"]],
  ["g2", 1135, 1190, ["#4d5256", "#5a6062", "#51565b"]],
  ["f1", 972, 1000, ["#212325", "#3b3f43"]],
  ["f2", 1024, 1058, ["#3b4044", "#34373a", "#212325"]],
  ["rim", 759, 1279, ["#232527", "#4c5155", "#596063", "#565d64", "#596063", "#4c5055", "#242628"]],
  ["bore", 943, 1108, ["#222426", "#474c4f", "#575d60", "#565c62", "#596062", "#4d5255", "#222426"]],
  ["ledge", 914, 1139, ["#222426", "#4b4f52", "#596063", "#555b62", "#595f62", "#484c50", "#222426"]],
]

function Scene() {
  return (
    <svg viewBox="516 151 1164 754" className="w-full h-full" role="img" aria-label="Zahnrad" strokeLinejoin="round">
      <defs>
        {gradients.map(([id, a, b, stops]) => (
          <linearGradient key={id} id={id} gradientUnits="userSpaceOnUse" x1={a} x2={b} y1="0" y2="0">
            {stops.map((s, i) => <stop key={i} offset={i / (stops.length - 1)} stopColor={s} />)}
          </linearGradient>
        ))}
        <clipPath id="front"><path d="M755 558L1020 480L1285 592V790H755Z" /></clipPath>
        <clipPath id="recess"><ellipse cx="1026.500" cy="473" rx="112.500" ry="82" transform="rotate(2 1026 473)" /></clipPath>
        <clipPath id="hole"><ellipse cx="1025.500" cy="486" rx="82.500" ry="60" transform="rotate(2 1025 486)" /></clipPath>
      </defs>
      <g stroke="#17181a" strokeWidth="1.500" clipPath="url(#front)">
        <ellipse cx="1020.500" cy="579" rx="260.500" ry="195" transform="rotate(1 1020 579)" fill="url(#rim)" />
        <ellipse cx="1022.500" cy="559" rx="261.500" ry="195" transform="rotate(2 1022 559)" fill={face} />
      </g>
      {walls.map(([d, fill]) => <path key={d} d={d} fill={fill} />)}
      <path d={wallEdges} fill="none" stroke="#17181a" strokeWidth="1.400" />
      <g stroke="#17181a" strokeWidth="1.500">
        <path d={gearTop} fill={face} />
        <ellipse cx="1026.500" cy="473" rx="112.500" ry="82" transform="rotate(2 1026 473)" fill="url(#ledge)" />
        <g clipPath="url(#recess)">
          <ellipse cx="1026" cy="487" rx="112.500" ry="83" transform="rotate(2 1026 487)" fill={face} />
        </g>
        <ellipse cx="1026.500" cy="473" rx="112.500" ry="82" transform="rotate(2 1026 473)" fill="none" />
        <ellipse cx="1025.500" cy="486" rx="82.500" ry="60" transform="rotate(2 1025 486)" fill="url(#bore)" />
        <g clipPath="url(#hole)">
          <ellipse cx="1020" cy="586" rx="82.500" ry="60" transform="rotate(2 1020 586)" fill="#3b3b3b" />
        </g>
        <path d="M1005 543V554Q1005 558 1009 558L1034 560Q1038 560 1038 555V545" fill="#3b3b3b" />
        <path d="M1007 541h30v8h-30z" fill="#3b3b3b" stroke="none" />
      </g>
    </svg>
  )
}

function NavCube() {
  return (
    <svg viewBox="0 0 140 140" className="absolute top-0 right-0 size-[140px]" role="img" aria-label="Navigationswürfel" strokeLinejoin="round">
      <g transform="translate(0 -6)">
        <g fill="#87939d" stroke="#33383c" strokeWidth="0.800">
          <path d="M77 13l9 11H68zM68 117h18l-9 10zM20 70l11-10v20zM134 70l-11-10v20z" />
          <path d="M60 19l2 6q-13 5-19 10l3 3-12 5 2-12 3 3q9-10 21-15zM94 19l-2 6q13 5 19 10l-3 3 12 5-2-12-3 3q-9-10-21-15z" />
          <circle cx="127" cy="20" r="5.500" />
          <path d="M52 43l13-8 29 3 12 9-4 46 -1 6-12 6-30-2-11-8z" />
          <path d="M58 40l7-5 29 3 6 4-1 23-6 2-30-2-6-4zM55 79l7-4 29 2 6 4-1 20-7 4-30-2-5-3z" />
          <path d="M63 66l29 1-1 10-29-2z" />
          <path d="M51 64l6-4 6 4-1 11-7 4-6-4zM91 68l6-4 7 5-1 8-6 4-6-4z" />
          <path d="M52 43l6-3-1 20-6 4zM100 42l6 5-2 22-6-5zM49 76l6 3-1 21-6-6zM97 81l6-4-1 16-6 6z" />
          <path d="M108 107l8-3 9 3v12l-9 5-8-5z" />
          <path d="M108 107l8 4 9-4M116 111v13" fill="none" />
        </g>
        <g fontFamily="Liberation Sans, sans-serif" fill="#4a545d" fontSize="10">
          <text x="64" y="54" transform="rotate(3 64 54)">OBEN</text>
          <text x="58" y="92" transform="rotate(3 58 92)">VORNE</text>
        </g>
        <path d="M44.500 111l1-32" stroke="#1b4f9a" strokeWidth="1.500" />
        <path d="M45 78v2" stroke="#1d8a1d" strokeWidth="2" />
        <path d="M44.500 111l44 3" stroke="#a11f1f" strokeWidth="2" />
      </g>
    </svg>
  )
}

function Axes() {
  return (
    <svg viewBox="0 0 44 48" className="absolute bottom-[29px] right-0 w-11 h-12" role="img" aria-label="Achsenkreuz">
      <path d="M8 41V24" stroke="#3a3a8a" strokeWidth="1" />
      <path d="M8 16l4 11H4z" fill="#1a1a9c" />
      <path d="M8 27v4M6 29l3-2" stroke="#1a7a2a" />
      <path d="M8 41l18 2" stroke="#7c1c1c" />
      <path d="M24 40l8 3-8 2z" fill="#7c1c1c" />
      <g fontFamily="Open Sans, sans-serif" fontSize="9" fontWeight="bold" fill="#0a0a0a">
        <text x="8" y="13">z</text>
        <text x="8" y="25">y</text>
        <text x="34" y="40">x</text>
      </g>
    </svg>
  )
}

const cross = <path d="M4 3l16 18M20 3 4 21M4 3h3M17 3h3M3 21h4M17 21h4" stroke="#111" strokeWidth="3" strokeLinecap="butt" />

function Tabs() {
  return (
    <div className="h-[35px] flex items-start border-t border-[#a9a9a9]">
      <div className="h-8 w-[99px] flex items-center justify-center gap-[6px] bg-[#dedede] border border-t-0 border-[#c2c2c2] rounded-b-[2px]">
        <button className="flex items-center gap-[5px]">
          <Icon className="size-4">
            <path d="M1 1h19v6H8v5h5v5H8v6H1z" fill="#e34c56" />
            <path d="M5 4h12v4H9v4h5v4H9v5H5z" fill="#fff" />
            <path d="M15 8h4v3h4v4h-2v4h-4v4h-6v-5h3v-4h-2v-3h3z" fill="#3f86d9" />
          </Icon>
          Start
        </button>
        <button aria-label="Start schließen"><Icon className="size-[14px]">{cross}</Icon></button>
      </div>
      <div className="h-[34px] w-[153px] flex items-center justify-center gap-2 bg-[#fafafa] border border-t-0 border-b-2 border-[#c8c8c8] rounded-b-[2px]">
        <button className="flex items-center gap-[6px]">
          <Icon className="size-4">{docIcon}</Icon>
          zahnrad_01 : 1*
        </button>
        <button aria-label="zahnrad_01 schließen"><Icon className="size-[14px]">{cross}</Icon></button>
      </div>
    </div>
  )
}

const menu = ["Datei", "Bearbeiten", "Ansicht", "Werkzeuge", "Makro", "Skizze", "Part Design", "Fenster", "Hilfe"]

export default function App() {
  return (
    <div className="min-h-screen flex flex-col bg-[#efefef] text-[#111] font-[Roboto,'Noto_Sans',sans-serif] text-[11px]">
      <nav className="h-[22px] flex items-end gap-px pl-[3px] text-[12px] font-['Open_Sans','Noto_Sans',sans-serif] border-b border-[#cfcfcf]">
        {menu.map((m) => (
          <button key={m} className="px-2"><span className="underline underline-offset-2">{m[0]}</span>{m.slice(1)}</button>
        ))}
      </nav>
      <Toolbar>
        <Tools items={bar1a} />
        <div className={`${box} mx-[3px] h-[26px] w-[150px] shrink-0 flex items-center gap-[3px] pl-[5px] pr-2 bg-linear-to-b from-[#fbfbfb] to-[#efefef]`}>
          <Icon className="size-4">{blueBody}</Icon>
          <select aria-label="Arbeitsbereich" className="flex-1 min-w-0 appearance-none outline-none">
            <option>Part Design</option>
          </select>
          <Arrow />
        </div>
        <Tools items={bar1b} lead={false} />
      </Toolbar>
      <Toolbar><Tools items={bar2} /></Toolbar>
      <Toolbar><Tools items={bar3} /></Toolbar>

      <main className="flex-1 flex">
        <aside className="w-[516px] shrink-0 flex flex-col pr-[7px]">
          <DockTitle title="Modell" close />
          <div className="flex-1 bg-white border border-[#bcbcbc]"><Tree /></div>
          <div className="h-[11px] flex items-center justify-center">
            <span className="w-[18px] h-[6px] bg-[radial-gradient(circle,#c6c6c6_1px,transparent_1px)] bg-size-[3px_3px]" />
          </div>
          <DockTitle title="Aufgaben" />
          <TaskPanel />
        </aside>
        <section className="flex-1 min-w-0 flex flex-col">
          <div className="flex-1 relative bg-[#3b3b3b]">
            <div className="absolute inset-0"><Scene /></div>
            <NavCube />
            <Axes />
          </div>
          <Tabs />
        </section>
      </main>

      <footer className="h-8 flex items-center justify-between pl-[2px] pr-[5px]">
        <span>Preselected: zahnrad_01.Body.Fillet.Edge133 (8.35 mm, -9.31 mm, 3.31 mm)</span>
        <div className="flex items-center">
          <button className="flex items-center gap-1">
            <Icon className="size-4"><path d="M12 2q6 0 6 6v8q0 6-6 6t-6-6V8q0-6 6-6zM12 6v4" stroke="#333" strokeWidth="1.800" /></Icon>
            CAD
            <span className="w-[30px] flex justify-center"><Arrow className="text-[#666] scale-75" /></span>
          </button>
          <button className="flex items-center gap-1 pl-2">55,88 mm x 36,22 mm<Arrow className="text-[#666] scale-75" /></button>
        </div>
      </footer>
    </div>
  )
}
